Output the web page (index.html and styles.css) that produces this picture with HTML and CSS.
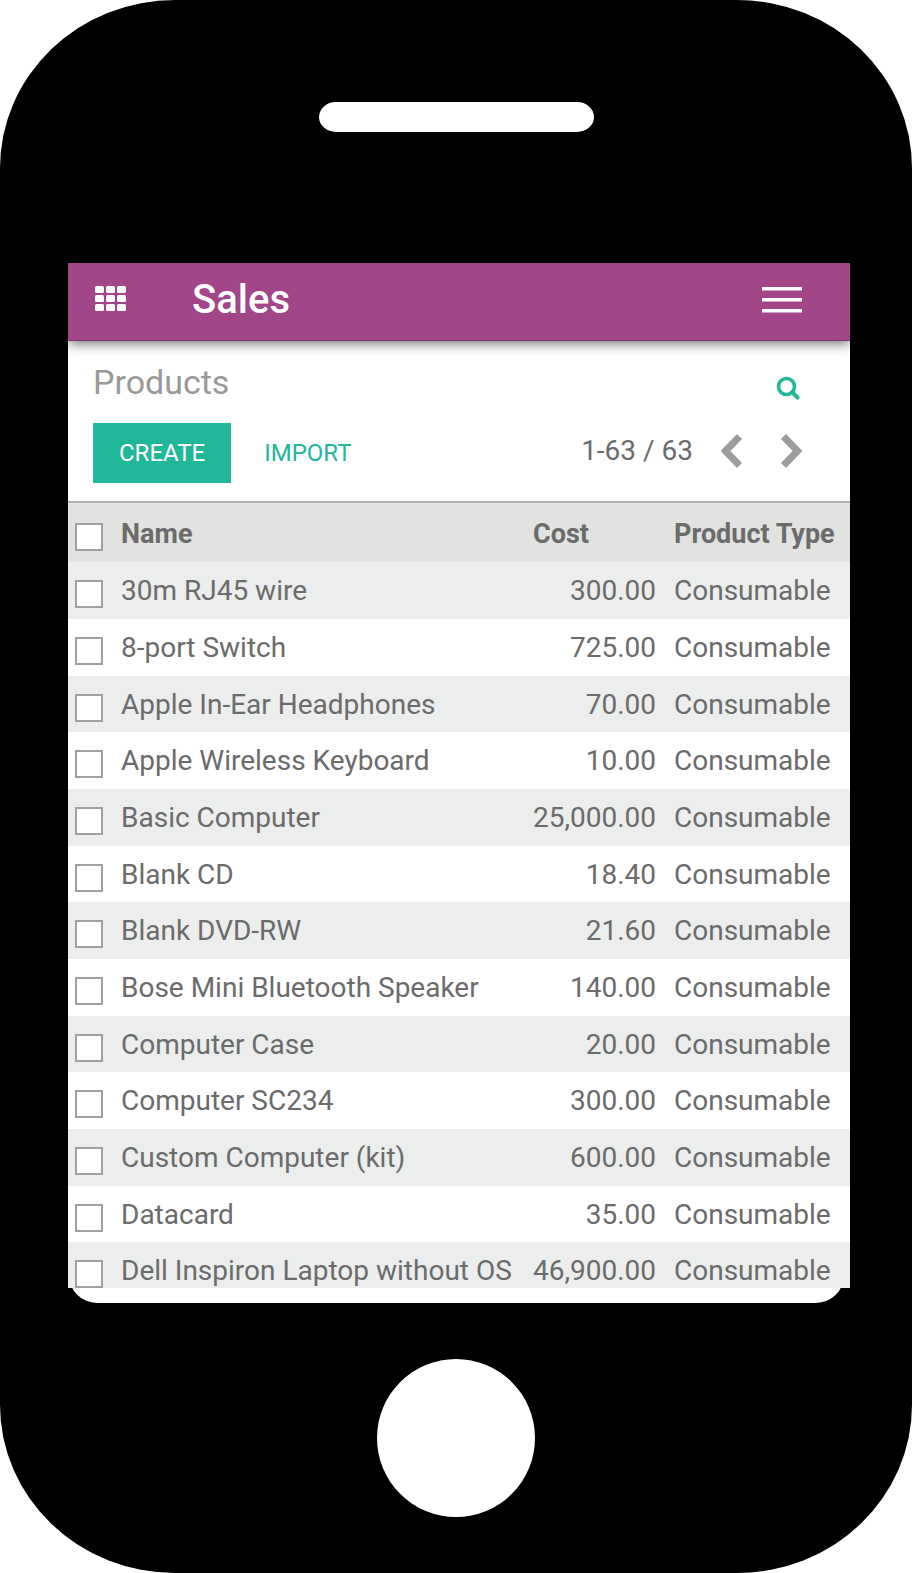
FILE: index.html
```html
<!DOCTYPE html>
<html lang="en">
<head>
<meta charset="utf-8">
<meta name="viewport" content="width=device-width, initial-scale=1">
<title>Sales - Products</title>
<link rel="stylesheet" href="styles.css">
</head>
<body>
<div class="phone">
  <div class="speaker"></div>
  <main class="screen">
    <header class="navbar">
      <button class="icon-button" type="button" aria-label="Applications">
        <svg width="34" height="28" viewBox="0 0 34 28" fill="#fff">
          <rect x="1" y="0" width="9" height="7" rx="1.5"/><rect x="12" y="0" width="9" height="7" rx="1.5"/><rect x="23" y="0" width="9" height="7" rx="1.5"/>
          <rect x="1" y="9" width="9" height="7" rx="1.5"/><rect x="12" y="9" width="9" height="7" rx="1.5"/><rect x="23" y="9" width="9" height="7" rx="1.5"/>
          <rect x="1" y="18" width="9" height="7" rx="1.5"/><rect x="12" y="18" width="9" height="7" rx="1.5"/><rect x="23" y="18" width="9" height="7" rx="1.5"/>
        </svg>
      </button>
      <h1 class="app-name">Sales</h1>
      <button class="icon-button" type="button" aria-label="Menu">
        <svg width="40" height="28" viewBox="0 0 40 28" fill="#fff">
          <rect y="1" width="40" height="3.5"/><rect y="12" width="40" height="3.5"/><rect y="23" width="40" height="3.5"/>
        </svg>
      </button>
    </header>
    <section class="control-panel">
      <div class="panel-row title-row">
        <h2 class="view-title">Products</h2>
        <button class="icon-button" type="button" aria-label="Search">
          <svg width="24" height="24" viewBox="0 0 24 24" fill="none" stroke="#21b799">
            <circle cx="10.5" cy="10.5" r="8" stroke-width="3.6"/>
            <path d="M16 16l5.500 5.500" stroke-width="4" stroke-linecap="round"/>
          </svg>
        </button>
      </div>
      <div class="panel-row">
        <div class="actions">
          <button class="button button-primary" type="button">CREATE</button>
          <button class="button button-link" type="button">IMPORT</button>
        </div>
        <div class="pager">
          <span class="pager-text">1-63 / 63</span>
          <button class="icon-button" type="button" aria-label="Previous">
            <svg width="22" height="34" viewBox="0 0 22 34" fill="none" stroke="#9d9d9d" stroke-width="7"><path d="M18.500 2.500L4.500 17l14 14.500"/></svg>
          </button>
          <button class="icon-button" type="button" aria-label="Next">
            <svg width="22" height="34" viewBox="0 0 22 34" fill="none" stroke="#9d9d9d" stroke-width="7"><path d="M3.500 2.500L17.500 17l-14 14.500"/></svg>
          </button>
        </div>
      </div>
    </section>
    <table class="list">
      <thead>
        <tr><th class="col-check"><input type="checkbox" aria-label="Select all"></th><th>Name</th><th class="col-cost">Cost</th><th class="col-type">Product Type</th></tr>
      </thead>
      <tbody>
        <tr><td><input type="checkbox" aria-label="Select 30m RJ45 wire"></td><td>30m RJ45 wire</td><td class="amount">300.00</td><td>Consumable</td></tr>
        <tr><td><input type="checkbox" aria-label="Select 8-port Switch"></td><td>8-port Switch</td><td class="amount">725.00</td><td>Consumable</td></tr>
        <tr><td><input type="checkbox" aria-label="Select Apple In-Ear Headphones"></td><td>Apple In-Ear Headphones</td><td class="amount">70.00</td><td>Consumable</td></tr>
        <tr><td><input type="checkbox" aria-label="Select Apple Wireless Keyboard"></td><td>Apple Wireless Keyboard</td><td class="amount">10.00</td><td>Consumable</td></tr>
        <tr><td><input type="checkbox" aria-label="Select Basic Computer"></td><td>Basic Computer</td><td class="amount">25,000.00</td><td>Consumable</td></tr>
        <tr><td><input type="checkbox" aria-label="Select Blank CD"></td><td>Blank CD</td><td class="amount">18.40</td><td>Consumable</td></tr>
        <tr><td><input type="checkbox" aria-label="Select Blank DVD-RW"></td><td>Blank DVD-RW</td><td class="amount">21.60</td><td>Consumable</td></tr>
        <tr><td><input type="checkbox" aria-label="Select Bose Mini Bluetooth Speaker"></td><td>Bose Mini Bluetooth Speaker</td><td class="amount">140.00</td><td>Consumable</td></tr>
        <tr><td><input type="checkbox" aria-label="Select Computer Case"></td><td>Computer Case</td><td class="amount">20.00</td><td>Consumable</td></tr>
        <tr><td><input type="checkbox" aria-label="Select Computer SC234"></td><td>Computer SC234</td><td class="amount">300.00</td><td>Consumable</td></tr>
        <tr><td><input type="checkbox" aria-label="Select Custom Computer (kit)"></td><td>Custom Computer (kit)</td><td class="amount">600.00</td><td>Consumable</td></tr>
        <tr><td><input type="checkbox" aria-label="Select Datacard"></td><td>Datacard</td><td class="amount">35.00</td><td>Consumable</td></tr>
        <tr><td><input type="checkbox" aria-label="Select Dell Inspiron Laptop without OS"></td><td>Dell Inspiron Laptop without OS</td><td class="amount">46,900.00</td><td>Consumable</td></tr>
      </tbody>
    </table>
  </main>
  <div class="screen-base"></div>
  <button class="home" type="button" aria-label="Home"></button>
</div>
</body>
</html>
```
FILE: styles.css
```css
* {
  box-sizing: border-box;
}

body {
  margin: 0;
  background: #fff;
  color: #6b6b6b;
  font-family: Roboto, "Liberation Sans", sans-serif;
  font-size: 28px;
  line-height: 32px;
}

button {
  padding: 0;
  border: 0;
  background: none;
  font-family: inherit;
  cursor: pointer;
}

h1,
h2 {
  margin: 0;
}

/* Phone body */
.phone {
  display: flex;
  flex-direction: column;
  min-height: 100vh;
  padding: 102px 62px 56px 68px;
  border-radius: 175px / 168px;
  background: #000;
}

.speaker {
  align-self: center;
  width: 275px;
  height: 30px;
  margin: 0 6px 131px 0;
  border-radius: 17px / 15px;
  background: #fff;
}

.screen {
  position: relative;
  z-index: 1;
  background: #fff;
}

.screen-base {
  height: 40px;
  margin: -25px 6px 0 1px;
  border-radius: 0 0 28px 28px;
  background: #fff;
}

.home {
  align-self: center;
  width: 158px;
  height: 158px;
  margin: 56px 6px 0 0;
  border-radius: 50%;
  background: #fff;
}

/* Application bar */
.navbar {
  display: flex;
  align-items: center;
  height: 78px;
  padding: 0 48px 4px 26px;
  border-bottom: 1px solid #7d3a6b;
  background: #a24689;
  box-shadow: 0 2px 12px rgba(0, 0, 0, 0.6);
  clip-path: inset(0 0 -16px 0);
}

.icon-button {
  display: flex;
}

.app-name {
  flex: 1;
  margin-left: 64px;
  color: #fff;
  font-size: 40px;
  font-weight: 500;
  line-height: 48px;
}

/* Control panel */
.control-panel {
  height: 162px;
  padding: 21px 48px 0 25px;
  border-bottom: 2px solid #afafaf;
}

.panel-row {
  display: flex;
  justify-content: space-between;
}

.title-row {
  align-items: center;
  height: 40px;
  margin-bottom: 21px;
}

.title-row .icon-button {
  margin: 12px 2px 0 0;
}

.view-title {
  color: #999;
  font-size: 34px;
  font-weight: 400;
  line-height: 40px;
}

.actions {
  display: flex;
  gap: 33px;
}

.button {
  height: 60px;
  font-size: 24px;
}

.button-primary {
  padding: 0 26px;
  background: #21b799;
  color: #fff;
}

.button-link {
  color: #21b799;
}

.pager {
  display: flex;
  align-items: center;
  height: 56px;
}

.pager-text {
  margin-right: 28px;
}

.pager .icon-button + .icon-button {
  margin-left: 37px;
}

/* Product list */
.list {
  width: 100%;
  border-collapse: collapse;
  table-layout: fixed;
}

.list th,
.list td {
  padding: 13px 9px 0;
  text-align: left;
  vertical-align: top;
  white-space: nowrap;
}

.list thead tr {
  height: 59px;
  background: #e2e2e0;
}

.list th {
  padding-top: 15px;
  font-size: 27px;
  font-weight: 700;
}

.list .col-check {
  width: 44px;
}

.list .col-cost {
  width: 141px;
}

.list .col-type {
  width: 185px;
}

.list td.amount {
  text-align: right;
}

.list th:first-child,
.list td:first-child {
  padding-right: 0;
  padding-left: 7px;
}

.list tbody tr {
  height: 57px;
}

.list tbody tr:nth-child(3n) {
  height: 56px;
}

.list tbody tr:nth-child(odd) {
  background: #eceeed;
}

.list tbody tr:last-child {
  height: 46px;
}

.list input {
  display: block;
  appearance: none;
  width: 28px;
  height: 28px;
  margin: 5px 0 0;
  border: 2px solid #a0a0a0;
  background: #fff;
}
```
